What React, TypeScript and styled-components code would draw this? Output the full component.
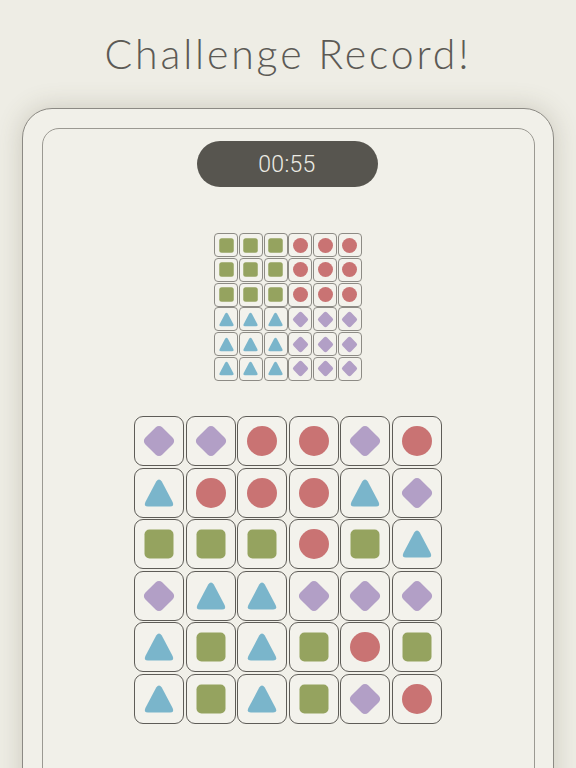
import React from "react";
import styled, { createGlobalStyle } from "styled-components";

const Global = createGlobalStyle`
  html, body { margin: 0; padding: 0; background: #eeede5; overflow: hidden; }
  body { font-family: "Lato", "Liberation Sans", sans-serif; }
`;

const Page = styled.div`
  width: 576px;
  height: 768px;
  display: flex;
  flex-direction: column;
  align-items: center;
  overflow: hidden;
`;

const Title = styled.h1`
  flex-shrink: 0;
  margin: 0;
  height: 108px;
  display: flex;
  align-items: center;
  justify-content: center;
  padding-bottom: 2px;
  box-sizing: border-box;
  font-family: "Lato", sans-serif;
  font-weight: 300;
  font-size: 41px;
  letter-spacing: 2.85px;
  color: #5c5a55;
`;

const Card = styled.div`
  flex-shrink: 0;
  align-self: stretch;
  margin: 0 22px;
  padding: 18.5px;
  min-height: 720px;
  box-sizing: border-box;
  background: #f1f0e9;
  border: 1.5px solid #8c8a84;
  border-radius: 30px;
  box-shadow: 0 0 26px rgba(90, 85, 60, 0.24);
`;

const Inner = styled.div`
  min-height: 700px;
  border: 1.5px solid #9b9992;
  border-radius: 17px;
  display: flex;
  flex-direction: column;
  align-items: center;
  padding-top: 12.5px;
`;

const Timer = styled.div`
  width: 181px;
  height: 46px;
  margin-left: -2px;
  border-radius: 23px;
  background: #57554f;
  color: #ecebe4;
  display: flex;
  align-items: center;
  justify-content: center;
  font-family: "Roboto", sans-serif;
  font-weight: 300;
  font-size: 23px;
  letter-spacing: 0.3px;
`;

const Grid = styled.div<{ $cell: number; $gap: number; $mt: number }>`
  margin-top: ${(p) => p.$mt}px;
  display: grid;
  grid-template-columns: repeat(6, ${(p) => p.$cell}px);
  grid-auto-rows: ${(p) => p.$cell}px;
  gap: ${(p) => p.$gap}px;
`;

const Tile = styled.div<{ $radius: number; $bw: number; $bc: string }>`
  box-sizing: border-box;
  border: ${(p) => p.$bw}px solid ${(p) => p.$bc};
  border-radius: ${(p) => p.$radius}px;
  background: #f3f2ec;
  display: flex;
  align-items: center;
  justify-content: center;
`;

const ShapeSvg = styled.svg`
  display: block;
  overflow: visible;
`;

type Kind = "S" | "C" | "T" | "D";

const COLORS: Record<Kind, string> = {
  S: "#95a35f",
  C: "#c97373",
  T: "#7ab5cb",
  D: "#b29fc6",
};

const Shape: React.FC<{ kind: Kind; size: number }> = ({ kind, size }) => {
  const fill = COLORS[kind];
  return (
    <ShapeSvg width={size} height={size} viewBox="0 0 30 30">
      {kind === "C" && <circle cx="15" cy="15" r="15" fill={fill} />}
      {kind === "S" && <rect x="0.5" y="0.5" width="29" height="29" rx="5" fill={fill} />}
      {kind === "D" && (
        <rect
          x="3"
          y="3"
          width="24"
          height="24"
          rx="4.5"
          fill={fill}
          transform="rotate(45 15 15)"
        />
      )}
      {kind === "T" && (
        <path
          d="M12.2 3.6 Q15 -0.6 17.8 3.6 L28.6 24 Q30.6 28.5 26 28.5 L4 28.5 Q-0.6 28.5 1.4 24 Z"
          fill={fill}
        />
      )}
    </ShapeSvg>
  );
};

const small: Kind[][] = [
  ["S", "S", "S", "C", "C", "C"],
  ["S", "S", "S", "C", "C", "C"],
  ["S", "S", "S", "C", "C", "C"],
  ["T", "T", "T", "D", "D", "D"],
  ["T", "T", "T", "D", "D", "D"],
  ["T", "T", "T", "D", "D", "D"],
];

const big: Kind[][] = [
  ["D", "D", "C", "C", "D", "C"],
  ["T", "C", "C", "C", "T", "D"],
  ["S", "S", "S", "C", "S", "T"],
  ["D", "T", "T", "D", "D", "D"],
  ["T", "S", "T", "S", "C", "S"],
  ["T", "S", "T", "S", "D", "C"],
];

export default function App() {
  return (
    <>
      <Global />
      <Page>
        <Title>Challenge Record!</Title>
        <Card>
          <Inner>
            <Timer>00:55</Timer>
            <Grid $cell={24} $gap={0.8} $mt={46}>
              {small.flat().map((k, i) => (
                <Tile key={i} $radius={4} $bw={1} $bc="#8d8b85">
                  <Shape kind={k} size={15} />
                </Tile>
              ))}
            </Grid>
            <Grid $cell={50} $gap={1.6} $mt={35}>
              {big.flat().map((k, i) => (
                <Tile key={i} $radius={9} $bw={1.5} $bc="#5e5c57">
                  <Shape kind={k} size={30} />
                </Tile>
              ))}
            </Grid>
          </Inner>
        </Card>
      </Page>
    </>
  );
}
